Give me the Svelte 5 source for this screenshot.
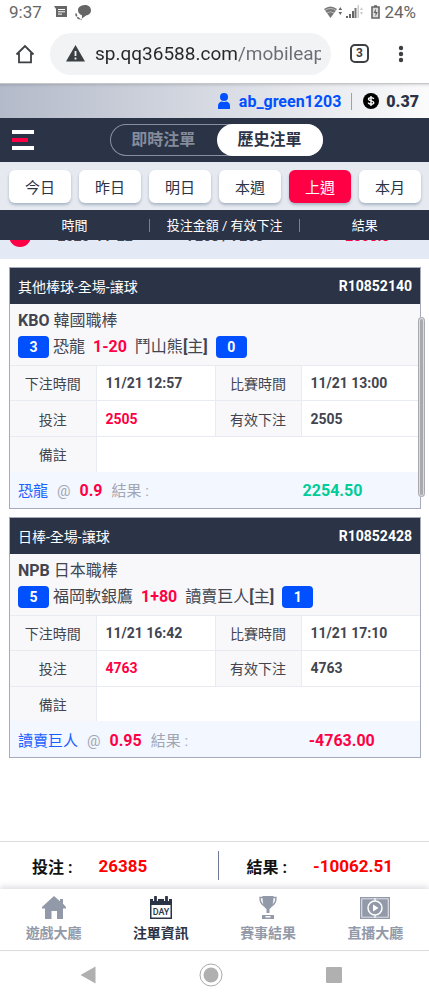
<script lang="ts">
  type Bet = {
    id: string;
    category: string;
    league: string;
    leagueName: string;
    home: string;
    homeScore: number;
    away: string;
    awayScore: number;
    line: string;
    betTime: string;
    gameTime: string;
    stake: number;
    valid: number;
    note: string;
    pick: string;
    odds: string;
    result: string;
  };

  let url = 'sp.qq36588.com/mobileapp';
  let range = '上週';
  let mode = 'history';

  const ranges = ['今日', '昨日', '明日', '本週', '上週', '本月'];

  const bets: Bet[] = [
    {
      id: 'R10852140',
      category: '其他棒球-全場-讓球',
      league: 'KBO',
      leagueName: '韓國職棒',
      home: '鬥山熊',
      homeScore: 0,
      away: '恐龍',
      awayScore: 3,
      line: '1-20',
      betTime: '11/21 12:57',
      gameTime: '11/21 13:00',
      stake: 2505,
      valid: 2505,
      note: '',
      pick: '恐龍',
      odds: '0.9',
      result: '2254.50',
    },
    {
      id: 'R10852428',
      category: '日棒-全場-讓球',
      league: 'NPB',
      leagueName: '日本職棒',
      home: '讀賣巨人',
      homeScore: 1,
      away: '福岡軟銀鷹',
      awayScore: 5,
      line: '1+80',
      betTime: '11/21 16:42',
      gameTime: '11/21 17:10',
      stake: 4763,
      valid: 4763,
      note: '',
      pick: '讀賣巨人',
      odds: '0.95',
      result: '-4763.00',
    },
  ];

  const tabs = [
    { key: 'lobby', label: '遊戲大廳' },
    { key: 'bets', label: '注單資訊' },
    { key: 'results', label: '賽事結果' },
    { key: 'live', label: '直播大廳' },
  ];
  let tab = 'bets';
</script>

<div class="screen">
  <div class="status-bar">
    <span>9:37</span>
    <svg class="notice" width="14" height="12" viewBox="0 0 14 12">
      <path d="M0 0h13v11H2V3z" fill="#666" />
      <path d="M4 3.5h7M4 5.8h7M4 8.1h4" stroke="#fff" stroke-width="1" />
    </svg>
    <svg width="17" height="17" viewBox="0 0 17 17">
      <path d="M9.500 1C13 .5 16 3 16 6.200s-2.500 5-5 5.300L7 14.500v-3.300C4.500 10.300 3 8.500 3 6.200 3 3 6 1.200 9.500 1z" fill="#666" />
      <path d="M1 9.500c0 3.500 2.500 5.500 5.500 6" fill="none" stroke="#666" stroke-width="1.600" stroke-dasharray="3 1" />
    </svg>
    <span class="spacer"></span>
    <svg width="19" height="14" viewBox="0 0 19 14">
      <path d="M0 4q6.500-5 13 0L6.500 13z" fill="#777" />
      <path d="M1 5.500q5.500-4 11 0M3 8q3.500-2.500 7 0" fill="none" stroke="#fff" stroke-width=".5" />
      <path d="M14.500 5l1.800-3 1.800 3zM14.500 7l1.800 3 1.800-3z" fill="#666" />
    </svg>
    <svg class="signal" width="18" height="14" viewBox="0 0 18 14">
      <path d="M0 13v-2h2v2zM3 13V9h2v4zM6 13V6h2v7z" fill="#666" />
      <path d="M8.500 13V3h2v10z" fill="#777" />
      <path d="M11.500 13V0h1.500v13z" fill="#ccc" />
      <path d="M14 5l1.500-3L17 5zM14 7l1.500 3L17 7z" fill="#ccc" />
    </svg>
    <svg class="battery" width="9" height="14" viewBox="0 0 9 14">
      <path d="M3 1h3M1 2h7v11H1z" fill="#ddd" stroke="#666" stroke-width="1.600" />
      <path d="M5 3.500L2.500 8h2v3.500L6.800 7h-2z" fill="#666" />
    </svg>
    <span>24%</span>
  </div>

  <div class="browser-bar">
    <button class="icon-btn" aria-label="Home">
      <svg width="20" height="20" viewBox="0 0 20 20">
        <path d="M1.500 10.500L10 2l8.500 8.500M4 9v9.300h12V9" fill="none" stroke="#3c4043" stroke-width="1.800" />
      </svg>
    </button>
    <div class="address">
      <svg width="19" height="17" viewBox="0 0 19 17">
        <path d="M9.500 0L19 16.500H0z" fill="#3c4043" />
        <path d="M9.500 6v5M9.500 12.500v2" stroke="#f1f3f5" stroke-width="1.800" />
      </svg>
      <input type="text" aria-label="URL" bind:value={url} />
    </div>
    <button class="icon-btn tab-count" aria-label="Tabs"><span>3</span></button>
    <button class="icon-btn menu" aria-label="More">
      <svg width="6" height="18" viewBox="0 0 6 18" fill="#3c4043">
        <circle cx="3" cy="3" r="2.200" /><circle cx="3" cy="9" r="2.200" /><circle cx="3" cy="15" r="2.200" />
      </svg>
    </button>
  </div>

  <div class="account">
    <svg width="12" height="16" viewBox="0 0 12 16" fill="#0050ff">
      <circle cx="6" cy="4" r="4" />
      <path d="M0 16v-3q0-4 4-4.500 2 1 4 0 4 .5 4 4.500v3z" />
    </svg>
    <a href="#account">ab_green1203</a>
    <i class="rule"></i>
    <svg width="16" height="16" viewBox="0 0 16 16">
      <circle cx="8" cy="8" r="8" fill="#000" />
      <path d="M10.800 6C10.300 4.200 5.500 4.200 5.500 6.200c0 2 5.300 1.300 5.300 3.500 0 2.200-5.100 2-5.500 0M8 3v10" fill="none" stroke="#fff" stroke-width="1.400" />
    </svg>
    <strong>0.37</strong>
  </div>

  <header class="topbar">
    <button class="burger" aria-label="選單"><i></i><i></i><i></i></button>
    <div class="switch">
      <button class:active={mode === 'live'} on:click={() => (mode = 'live')}>即時注單</button>
      <button class:active={mode === 'history'} on:click={() => (mode = 'history')}>歷史注單</button>
    </div>
  </header>

  <div class="ranges">
    {#each ranges as r}
      <button class:active={range === r} on:click={() => (range = r)}>{r}</button>
    {/each}
  </div>

  <div class="columns head">
    <span>時間</span>
    <span>投注金額 / 有效下注</span>
    <span>結果</span>
  </div>

  <main>
    <!-- day summary, mostly scrolled under the column heads -->
    <div class="day-clip">
      <div class="columns day">
        <button class="collapse" aria-label="收合">
          <svg width="22" height="22" viewBox="0 0 22 22">
            <circle cx="11" cy="11" r="11" fill="#ff0044" />
            <path d="M6 11h10" stroke="#fff" stroke-width="2" />
          </svg>
        </button>
        <span>2020-11-22</span>
        <span>7268 / 7268</span>
        <span class="loss">-2508.5</span>
      </div>
    </div>

    {#each bets as bet (bet.id)}
      <article class="bet">
        <div class="bet-head">
          <span>{bet.category}</span>
          <strong>{bet.id}</strong>
        </div>
        <div class="match">
          <div><b>{bet.league}</b> {bet.leagueName}</div>
          <div class="teams">
            <span class="score">{bet.awayScore}</span>
            <span>{bet.away}</span>
            <span class="line">{bet.line}</span>
            <span>{bet.home}<b>[</b>主<b>]</b></span>
            <span class="score last">{bet.homeScore}</span>
          </div>
        </div>
        <table>
          <tbody>
            <tr>
              <th>下注時間</th>
              <td>{bet.betTime}</td>
              <th>比賽時間</th>
              <td>{bet.gameTime}</td>
            </tr>
            <tr class="stake">
              <th>投注</th>
              <td class="loss">{bet.stake}</td>
              <th>有效下注</th>
              <td>{bet.valid}</td>
            </tr>
            <tr>
              <th>備註</th>
              <td colspan="3">{bet.note}</td>
            </tr>
          </tbody>
        </table>
        <div class="bet-foot">
          <div class="pick">
            <span class="name">{bet.pick}</span>
            <span>@</span>
            <b class="loss">{bet.odds}</b>
            <span>結果 :</span>
          </div>
          <strong class={bet.result.startsWith('-') ? 'loss' : 'win'}>{bet.result}</strong>
        </div>
      </article>
    {/each}
    <i class="scroll-thumb"></i>
  </main>

  <div class="totals">
    <div><b>投注 :</b><strong>26385</strong></div>
    <div><b>結果 :</b><strong>-10062.51</strong></div>
  </div>

  <nav class="tabs">
    {#each tabs as t}
      <a href="#{t.key}" class:active={tab === t.key} on:click|preventDefault={() => (tab = t.key)}>
        {#if t.key === 'lobby'}
          <svg width="24" height="24" viewBox="0 0 24 24" fill="currentColor">
            <path d="M12 0l6 5.200V3h3v4.800L24 11v1.500h-3V23h-6v-8H9.500v8H3V12.500H0V11z" />
          </svg>
        {:else if t.key === 'bets'}
          <svg width="24" height="24" viewBox="0 0 24 24">
            <path d="M1 3h22v20H1z" fill="currentColor" />
            <path d="M2.500 9h19v12.500h-19z" fill="#fff" />
            <path d="M6.500 0v5M17.500 0v5" stroke="#fff" stroke-width="5" />
            <path d="M6.500 1v4M17.500 1v4" stroke="currentColor" stroke-width="2.800" stroke-linecap="round" />
            <text x="12" y="18.500" text-anchor="middle">DAY</text>
          </svg>
        {:else if t.key === 'results'}
          <svg width="24" height="24" viewBox="0 0 24 24">
            <path d="M6.500 0h11c0 7-1 11.500-4 13v4h-3v-4c-3-1.500-4-6-4-13z" fill="currentColor" />
            <path d="M7 1.500H4C4 6 5.500 8.500 8.500 10M17 1.500h3c0 4.500-1.500 7-4.500 8.500" fill="none" stroke="currentColor" stroke-width="1.400" />
            <path d="M6 19h12v4H6z" fill="currentColor" />
            <path d="M9.500 20h5v1.500h-5z" fill="#fff" />
          </svg>
        {:else}
          <svg width="30" height="24" viewBox="0 0 30 24">
            <path d="M.7 1.700h28.600v20.600H.7z" fill="#fff" stroke="currentColor" stroke-width="1.400" />
            <path d="M2.200 3.200h25.600v17.600H2.200z" fill="currentColor" />
            <path d="M15 2v20" stroke="#fff" stroke-width="1.200" />
            <circle cx="15" cy="12" r="7" fill="currentColor" stroke="#fff" stroke-width="1.500" />
            <path d="M13 8.500l5.500 3.500-5.500 3.500z" fill="#fff" />
          </svg>
        {/if}
        <span>{t.label}</span>
      </a>
    {/each}
  </nav>

  <div class="system-nav">
    <button aria-label="Back">
      <svg width="16" height="18" viewBox="0 0 16 18"><path d="M15.500.5v17L.5 9z" fill="#b0b0b0" /></svg>
    </button>
    <button aria-label="Home screen">
      <svg width="24" height="24" viewBox="0 0 24 24">
        <circle cx="12" cy="12" r="11" fill="none" stroke="#aaa" />
        <circle cx="12" cy="12" r="7.500" fill="#b0b0b0" />
      </svg>
    </button>
    <button aria-label="Recent">
      <svg width="16" height="16" viewBox="0 0 16 16"><rect width="16" height="16" rx="1" fill="#b0b0b0" /></svg>
    </button>
  </div>
</div>

<style>
  :global(body) {
    background: #fff;
  }

  .screen {
    display: flex;
    flex-direction: column;
    height: 100vh;
    font-family: Roboto, 'Noto Sans CJK TC', sans-serif;
    font-size: 14px;
    color: #42454f;
  }

  .screen * {
    box-sizing: border-box;
  }

  .screen > * {
    flex-shrink: 0;
  }

  svg {
    display: block;
    flex-shrink: 0;
  }

  button {
    border: 0;
    padding: 0;
    background: none;
    font: inherit;
    color: inherit;
    cursor: pointer;
  }

  a {
    text-decoration: none;
  }

  .loss {
    color: #ff0044;
  }

  .win {
    color: #00cc99;
  }

  .status-bar {
    display: flex;
    align-items: center;
    height: 26px;
    padding: 0 13px 2px 9px;
    font-size: 17px;
    color: #666;
  }
  .status-bar .notice { margin: 0 7px 0 12px; }
  .status-bar .signal { margin: 0 7px 0 3px; }
  .status-bar .battery { margin-right: 4px; }
  .spacer { flex: 1; }

  .browser-bar {
    display: flex;
    align-items: center;
    height: 58px;
    padding: 0 24px 2px 15px;
    border-bottom: 1px solid #c4c6ca;
  }

  .address {
    display: flex;
    flex: 1;
    align-items: center;
    gap: 10px;
    min-width: 0;
    height: 42px;
    margin: 0 19px 0 15px;
    padding: 0 10px 0 16px;
    border-radius: 21px;
    background: #f1f3f5;
  }

  .address input {
    flex: 1;
    min-width: 0;
    border: 0;
    padding: 0;
    outline: 0;
    font-family: inherit;
    font-size: 19px;
    line-height: 28px;
    color: transparent;
    /* host dark, path muted */
    background: linear-gradient(to right, #25272a 143px, #6a6d72 143px);
    background-clip: text;
  }

  .tab-count span {
    display: block;
    width: 19px;
    height: 19px;
    border: 2px solid #3c4043;
    border-radius: 5px;
    font-size: 12px;
    font-weight: 700;
    line-height: 15px;
    text-align: center;
    color: #3c4043;
  }

  .menu {
    margin-left: 28px;
    padding: 0 1px;
  }

  .account {
    display: flex;
    align-items: center;
    justify-content: flex-end;
    height: 34px;
    padding: 0 10px;
    background: linear-gradient(to right, #b3bac9, #fbfbfc);
    box-shadow: inset 0 3px 3px -2px rgba(0, 0, 0, 0.15);
    font-size: 16px;
    font-weight: 700;
  }
  .account a { margin-left: 9px; color: #0050ff; }
  .account strong { margin-left: 7px; color: #2b3245; }
  .account .rule {
    width: 1px;
    height: 17px;
    margin: 0 11px 0 10px;
    background: #9ca1ab;
  }

  .topbar {
    position: relative;
    display: flex;
    align-items: center;
    justify-content: center;
    height: 44px;
    padding-left: 4px;
    background: #2b3346;
  }

  .burger {
    position: absolute;
    left: 12px;
    display: grid;
    gap: 4px;
  }
  .burger i {
    width: 22px;
    height: 4px;
    background: #fff;
  }
  .burger i:nth-child(2) { width: 16px; background: #ff0044; }

  .switch {
    display: flex;
    width: 50%;
    height: 32px;
    border-radius: 16px;
    box-shadow: inset 0 0 0 1px #8890a0;
  }
  .switch button {
    flex: 1;
    border-radius: 16px;
    font-size: 16px;
    font-weight: 700;
    line-height: 30px;
    color: #848c9c;
  }
  .switch .active { background: #fff; color: #2b3346; }

  .ranges {
    display: grid;
    grid-template-columns: repeat(6, 1fr);
    gap: 8px;
    height: 48px;
    padding: 8px 8px 7px 9px;
    background: #e6e9f0;
  }
  .ranges button {
    border-radius: 6px;
    background: #fff;
    box-shadow: 0 2px 3px #a9b5c6;
    font-size: 15px;
    color: #2b3346;
  }
  .ranges .active { background: #ff0044; color: #fff; }

  .columns {
    display: grid;
    grid-template-columns: 35fr 35fr 30fr;
    align-items: center;
    text-align: center;
  }

  .head {
    height: 30px;
    background: #2b3346;
    font-size: 13px;
    color: #fff;
  }
  .head span { border-right: 1px solid #7a8090; line-height: 13px; }
  .head span:last-child { border: 0; }

  main {
    position: relative;
    flex: 1 1 0 !important;
    min-height: 0;
    overflow: hidden;
  }

  .day-clip {
    display: flex;
    flex-direction: column;
    justify-content: flex-end;
    height: 19px;
    overflow: hidden;
    margin-bottom: 8px;
    background: #e3eaf6;
  }

  .day {
    position: relative;
    flex-shrink: 0;
    height: 46px;
    font-weight: 700;
  }
  .day span:first-of-type { padding-left: 40px; }

  .collapse {
    position: absolute;
    left: 9px;
  }

  .bet {
    margin: 0 8px 8px 9px;
    border: 1px solid #a5abb8;
  }

  .bet-head {
    display: flex;
    align-items: center;
    justify-content: space-between;
    height: 36px;
    padding: 0 8px;
    background: #2b3346;
    color: #fff;
  }

  .match {
    padding: 4px 8px 5px;
    background: #f8f8fb;
    font-size: 16px;
    line-height: 26px;
  }

  .teams {
    display: flex;
    align-items: center;
  }

  .score {
    width: 31px;
    margin-right: 4px;
    border-radius: 4px;
    background: #0050ff;
    font-size: 14px;
    font-weight: 700;
    line-height: 22px;
    text-align: center;
    color: #fff;
  }
  .score.last { margin: 0 0 0 8px; }

  .line {
    margin: 0 8px;
    font-weight: 700;
    color: #ff0044;
  }

  table {
    width: 100%;
    border-collapse: collapse;
    table-layout: fixed;
  }

  th,
  td {
    height: 35px;
    padding: 0;
    border-top: 1px solid #e9ebf2;
  }

  .stake th,
  .stake td {
    height: 36px;
  }

  th {
    width: 86px;
    border-right: 1px solid #e9ebf2;
    background: #f8f8fb;
    font-weight: 400;
    text-align: center;
  }

  td {
    padding-left: 9px;
    font-weight: 700;
    text-align: left;
  }

  td + th {
    border-left: 1px solid #e9ebf2;
  }

  .bet-foot {
    display: flex;
    align-items: center;
    height: 36px;
    padding: 3px 0 0 8px;
    background: #f3f7ff;
    font-size: 16px;
    line-height: 24px;
  }
  .bet-foot strong { flex: 6 0 auto; text-align: center; }

  .pick {
    display: flex;
    flex: 5 0 auto;
    align-items: baseline;
    gap: 9px;
    font-size: 15px;
    color: #a2a6b2;
  }
  .pick .name { color: #1a60ff; }
  .pick b { font-size: 16px; }

  .scroll-thumb {
    position: absolute;
    top: 77px;
    right: 4px;
    width: 7px;
    height: 180px;
    border: 2px solid #dcdddf;
    border-radius: 4px;
    background: #a9aaae;
    outline: 1px solid #a8a9ad;
    outline-offset: -1px;
  }

  .totals {
    display: grid;
    grid-template-columns: 1fr 1fr;
    height: 48px;
    padding: 9px 0;
    border-top: 1px solid #dcdcdc;
    color: #111;
    font-size: 16px;
  }
  .totals div {
    display: flex;
    align-items: center;
    gap: 26px;
    padding-left: 32px;
  }
  .totals div + div {
    padding-left: 28px;
    margin-left: 3px;
    border-left: 1px solid #6f7896;
  }
  .totals strong { font-size: 17px; color: #ff0000; }

  .tabs {
    display: grid;
    grid-template-columns: repeat(4, 1fr);
    height: 62px;
    padding-top: 7px;
    border-bottom: 1px solid #dcdcdc;
    box-shadow: 0 -3px 5px rgba(60, 70, 90, 0.15);
  }
  .tabs a {
    display: flex;
    flex-direction: column;
    align-items: center;
    gap: 3px;
    font-weight: 700;
    line-height: 20px;
    color: #9299a9;
  }
  .tabs a.active { color: #2b3346; }
  .tabs text {
    font-size: 9px;
    font-weight: 500;
    fill: currentColor;
  }

  .system-nav {
    display: grid;
    grid-template-columns: repeat(3, 1fr);
    height: 49px;
    padding: 0 34px 1px 27px;
  }
  .system-nav button {
    display: grid;
    place-items: center;
  }
</style>
